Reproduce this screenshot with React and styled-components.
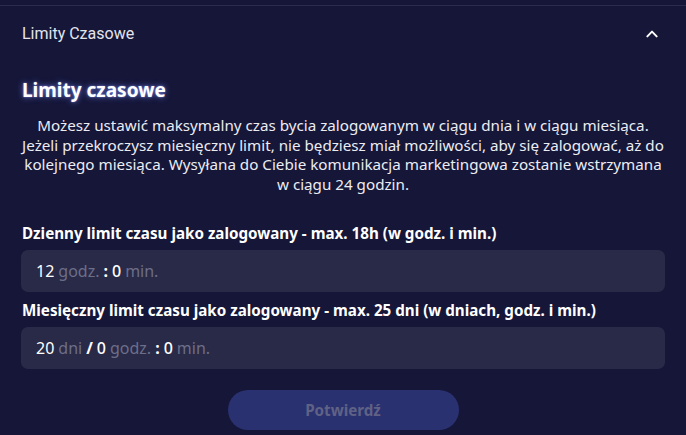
import React from "react";
import styled, { createGlobalStyle } from "styled-components";

const GlobalStyle = createGlobalStyle`
  html, body {
    margin: 0;
    padding: 0;
    background: #151638;
  }
  * { box-sizing: border-box; }
`;

const Panel = styled.section`
  width: 686px;
  height: 435px;
  padding-top: 5px;
  background: #151638;
  font-family: "Noto Sans", "Open Sans", sans-serif;
  color: #ffffff;
  overflow: hidden;
`;

const Header = styled.button`
  display: flex;
  align-items: center;
  justify-content: space-between;
  width: 100%;
  height: 56px;
  padding: 0 27px 0 22px;
  border: 0;
  border-top: 1px solid #2b2c4c;
  background: transparent;
  color: #e4e4ec;
  font-family: "Roboto", "Liberation Sans", sans-serif;
  font-size: 16px;
  cursor: pointer;
`;

const Body = styled.div`
  padding: 16px 21px 0 21px;
  display: flex;
  flex-direction: column;
`;

const Title = styled.h2`
  margin: 0 0 0 1px;
  font-size: 19px;
  font-weight: 700;
  line-height: 26px;
  text-shadow: 0 0 6px rgba(120, 140, 255, 0.8), 0 0 2px rgba(160, 170, 255, 0.7);
`;

const Description = styled.p`
  margin: 13px 0 0;
  text-align: center;
  font-size: 15.2px;
  line-height: 19.7px;
  color: #ecedf3;
`;

const Field = styled.div`
  display: flex;
  flex-direction: column;
  margin-top: ${({ $first }) => ($first ? "28px" : "8px")};
`;

const Label = styled.label`
  margin-left: 1px;
  font-size: 15.2px;
  font-weight: 700;
  line-height: 20px;
  color: #ffffff;
`;

const InputBox = styled.div`
  display: flex;
  align-items: center;
  gap: 4px;
  height: 42px;
  margin-top: 7px;
  padding: 0 15px;
  border-radius: 7px;
  background: #282a48;
  font-size: 16px;
`;

const Value = styled.span`
  color: #ffffff;
  font-weight: ${({ $weight }) => $weight || 400};
`;

const Unit = styled.span`
  color: #6d6e88;
`;

const Actions = styled.div`
  display: flex;
  justify-content: center;
  margin-top: 21px;
`;

const Confirm = styled.button`
  width: 231px;
  height: 40px;
  border: 0;
  border-radius: 20px;
  background: #2a3170;
  color: #5f6285;
  font-family: "Noto Sans", sans-serif;
  font-size: 15.2px;
  font-weight: 700;
`;

const Chevron = () => (
  <svg width="14" height="14" viewBox="0 0 24 24" fill="none" stroke="#ffffff" strokeWidth="3.4" strokeLinecap="round" strokeLinejoin="round">
    <path d="M4 16l8-8 8 8" />
  </svg>
);

const TimeInput = ({ parts }) => (
  <InputBox>
    {parts.map((p, i) =>
      p.unit ? <Unit key={i}>{p.text}</Unit> : <Value key={i} $weight={p.weight}>{p.text}</Value>
    )}
  </InputBox>
);

export default function App() {
  return (
    <>
      <GlobalStyle />
      <Panel>
        <Header>
          <span>Limity Czasowe</span>
          <Chevron />
        </Header>
        <Body>
          <Title>Limity czasowe</Title>
          <Description>
            Możesz ustawić maksymalny czas bycia zalogowanym w ciągu dnia i w ciągu miesiąca.
            <br />
            Jeżeli przekroczysz miesięczny limit, nie będziesz miał możliwości, aby się zalogować, aż do
            <br />
            kolejnego miesiąca. Wysyłana do Ciebie komunikacja marketingowa zostanie wstrzymana
            <br />
            w ciągu 24 godzin.
          </Description>
          <Field $first>
            <Label>Dzienny limit czasu jako zalogowany - max. 18h (w godz. i min.)</Label>
            <TimeInput
              parts={[
                { text: "12" },
                { text: "godz.", unit: true },
                { text: ":", weight: 700 },
                { text: "0", weight: 500 },
                { text: "min.", unit: true },
              ]}
            />
          </Field>
          <Field>
            <Label>Miesięczny limit czasu jako zalogowany - max. 25 dni (w dniach, godz. i min.)</Label>
            <TimeInput
              parts={[
                { text: "20" },
                { text: "dni", unit: true },
                { text: "/", weight: 700 },
                { text: "0", weight: 500 },
                { text: "godz.", unit: true },
                { text: ":", weight: 700 },
                { text: "0", weight: 500 },
                { text: "min.", unit: true },
              ]}
            />
          </Field>
          <Actions>
            <Confirm disabled>Potwierdź</Confirm>
          </Actions>
        </Body>
      </Panel>
    </>
  );
}
